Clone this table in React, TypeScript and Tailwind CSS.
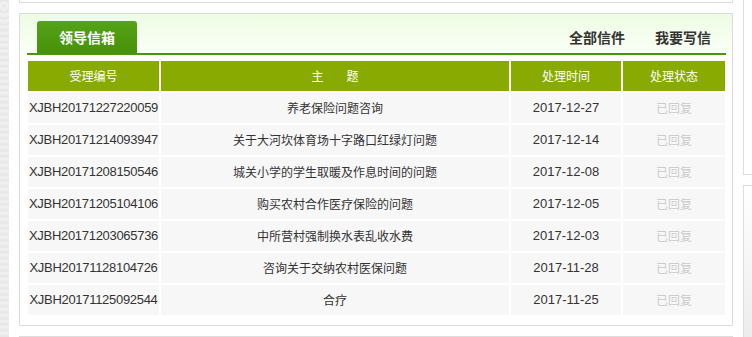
const rows = [
  { id: "XJBH20171227220059", title: "养老保险问题咨询", date: "2017-12-27" },
  { id: "XJBH20171214093947", title: "关于大河坎体育场十字路口红绿灯问题", date: "2017-12-14" },
  { id: "XJBH20171208150546", title: "城关小学的学生取暖及作息时间的问题", date: "2017-12-08" },
  { id: "XJBH20171205104106", title: "购买农村合作医疗保险的问题", date: "2017-12-05" },
  { id: "XJBH20171203065736", title: "中所营村强制换水表乱收水费", date: "2017-12-03" },
  { id: "XJBH20171128104726", title: "咨询关于交纳农村医保问题", date: "2017-11-28" },
  { id: "XJBH20171125092544", title: "合疗", date: "2017-11-25" },
];

const cjk = "font-['Microsoft_YaHei','Noto_Sans_CJK_SC',sans-serif]";
const latin = "font-['Liberation_Sans','Noto_Sans_CJK_SC',sans-serif]";

export default function App() {
  return (
    <div className="flex h-[337px] w-[752px] overflow-hidden bg-[#ececec]">
      {/* page texture strip */}
      <div className="w-[9px] shrink-0 bg-[repeating-radial-gradient(circle_at_4px_6px,#e4e4e4_0px,#f2f2f2_3px,#e8e8e8_6px)]" />
      <div className="flex flex-1 bg-white pl-[10px]">
        {/* main column */}
        <div className="flex w-[714px] shrink-0 flex-col">
          <div className="h-[3px] shrink-0 border-x border-b border-[#dddddd]" />
          <div className="mt-[10px] h-[313px] shrink-0 border border-[#dddddd] bg-white">
            {/* tab bar */}
            <div className="bg-gradient-to-b from-[#edfce3] to-[#fbfff8] pt-[7px]">
              <div className="ml-[7px] mr-[6px] flex items-center border-b-2 border-[#4a960c]">
                <div
                  className={`ml-[10px] flex h-[32px] w-[100px] items-center justify-center rounded-t-[3px] bg-gradient-to-b from-[#55a318] to-[#469208] text-[14px] font-bold text-white ${cjk}`}
                >
                  领导信箱
                </div>
                <div className={`ml-auto mr-[15px] flex gap-[30px] text-[14px] font-bold text-[#333333] ${cjk}`}>
                  <span>全部信件</span>
                  <span>我要写信</span>
                </div>
              </div>
            </div>

            {/* letters table */}
            <div className="ml-[8px] mt-[6px] grid w-[697px] grid-cols-[131px_348px_110px_102px] gap-[2px] text-[12px]">
              <div className={`flex h-[30px] items-center justify-center bg-[#89aa00] text-white ${cjk}`}>受理编号</div>
              <div className={`flex h-[30px] items-center justify-center gap-[23px] bg-[#89aa00] text-white ${cjk}`}>
                <span>主</span>
                <span>题</span>
              </div>
              <div className={`flex h-[30px] items-center justify-center bg-[#89aa00] text-white ${cjk}`}>处理时间</div>
              <div className={`flex h-[30px] items-center justify-center bg-[#89aa00] text-white ${cjk}`}>处理状态</div>
              {rows.map((r) => (
                <div key={r.id} className="contents">
                  <div className={`flex h-[30px] items-center justify-center whitespace-nowrap bg-[#f7f7f7] text-[13px] tracking-[-0.3px] text-[#333333] ${latin}`}>
                    {r.id}
                  </div>
                  <div className={`flex h-[30px] items-center justify-center bg-[#f7f7f7] text-[#333333] ${cjk}`}>{r.title}</div>
                  <div className={`flex h-[30px] items-center justify-center bg-[#f7f7f7] text-[13px] text-[#333333] ${latin}`}>
                    {r.date}
                  </div>
                  <div className={`flex h-[30px] items-center justify-center bg-[#f7f7f7] text-[#cccccc] ${cjk}`}>已回复</div>
                </div>
              ))}
            </div>
          </div>
          <div className="mt-[10px] h-[20px] shrink-0 border border-[#dddddd]" />
        </div>

        {/* right column */}
        <div className="ml-[10px] flex flex-1 flex-col">
          <div className="h-[175px] shrink-0 border-b border-l border-[#dddddd]" />
          <div className="mt-[10px] h-[160px] shrink-0 border-l border-t border-[#dddddd] bg-gradient-to-b from-white to-[#ebebeb]" />
        </div>
      </div>
    </div>
  );
}
